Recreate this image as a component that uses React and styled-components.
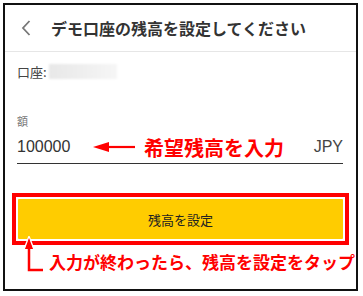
import React from "react";
import styled, { createGlobalStyle } from "styled-components";

const GlobalStyle = createGlobalStyle`
  body {
    margin: 0;
    background: #fff;
    font-family: "Noto Sans CJK JP", "Noto Sans", sans-serif;
  }
`;

const Frame = styled.div`
  margin: 3px 0 0 3px;
  width: 351px;
  height: 284px;
  border: 2px solid #111;
  display: flex;
  flex-direction: column;
`;

const Header = styled.div`
  height: 46px;
  border-bottom: 1px solid #e6e6e6;
  display: flex;
  align-items: center;
  padding-left: 16px;
  gap: 20px;
`;

const Title = styled.h1`
  margin: 0;
  font-size: 16px;
  font-weight: 700;
  color: #333;
`;

const Body = styled.div`
  padding: 0 13px 0 12px;
  display: flex;
  flex-direction: column;
`;

const AccountRow = styled.div`
  display: flex;
  align-items: center;
  height: 18px;
  margin-top: 10px;
  font-size: 13px;
  color: #444;
`;

const Blurred = styled.div`
  width: 68px;
  height: 15px;
  margin-left: 2px;
  background: linear-gradient(to right, #e8e8e8, #f0f0f0 60%, #f6f6f6);
  filter: blur(1px);
`;

const Label = styled.div`
  margin-top: 34px;
  font-size: 11px;
  color: #777;
  height: 14px;
  line-height: 14px;
`;

const InputRow = styled.div`
  margin-top: 4px;
  height: 30px;
  display: flex;
  align-items: center;
  border-bottom: 1px solid #333;
  padding-bottom: 1px;
`;

const Value = styled.span`
  font-family: "Liberation Sans", Arial, sans-serif;
  font-size: 16px;
  color: #333;
  width: 75px;
`;

const Note = styled.span`
  color: #f00;
  font-weight: 700;
  font-size: ${(p) => p.size}px;
  white-space: nowrap;
`;

const Unit = styled.span`
  margin-left: auto;
  font-family: "Liberation Sans", Arial, sans-serif;
  font-size: 16px;
  color: #444;
`;

const Highlight = styled.div`
  margin: 29px 7px 0 7px;
  border: 4px solid #f00;
  padding: 2px;
`;

const Button = styled.button`
  display: block;
  width: 100%;
  height: 40px;
  border: none;
  border-radius: 1px;
  background: #ffcc00;
  color: #222;
  font-family: "Noto Sans CJK JP", sans-serif;
  font-size: 13px;
  cursor: pointer;
`;

const Callout = styled.div`
  display: flex;
  align-items: flex-start;
  margin: -9px 0 0 16px;
  gap: 2px;
`;

const CalloutText = styled(Note)`
  margin-top: 14px;
  line-height: 24px;
`;

const Chevron = () => (
  <svg width="10" height="16" viewBox="0 0 10 16">
    <path d="M8.5 1 L2 8 L8.5 15" fill="none" stroke="#777" strokeWidth="1.8" />
  </svg>
);

const LeftArrow = () => (
  <svg width="46" height="12" viewBox="0 0 46 12" style={{ marginRight: 6 }}>
    <path d="M14 6 H43" stroke="#f00" strokeWidth="2.2" />
    <path d="M1 6 L17 1 L17 11 Z" fill="#f00" />
  </svg>
);

const LArrow = () => (
  <svg width="26" height="40" viewBox="0 0 26 40">
    <path d="M8 10 V34 H22" fill="none" stroke="#fff" strokeWidth="5" />
    <path d="M8 1 L3 14 L13 14 Z" fill="#f00" stroke="#fff" strokeWidth="2" strokeLinejoin="round" />
    <path d="M8 10 V34 H22" fill="none" stroke="#f00" strokeWidth="2.5" />
    <path d="M8 2 L4 13 L12 13 Z" fill="#f00" />
  </svg>
);

export default function App() {
  return (
    <>
      <GlobalStyle />
      <Frame>
        <Header>
          <Chevron />
          <Title>デモ口座の残高を設定してください</Title>
        </Header>
        <Body>
          <AccountRow>
            口座:<Blurred />
          </AccountRow>
          <Label>額</Label>
          <InputRow>
            <Value>100000</Value>
            <LeftArrow />
            <Note size={20}>希望残高を入力</Note>
            <Unit>JPY</Unit>
          </InputRow>
        </Body>
        <Highlight>
          <Button>残高を設定</Button>
        </Highlight>
        <Callout>
          <LArrow />
          <CalloutText size={17}>入力が終わったら、残高を設定をタップ</CalloutText>
        </Callout>
      </Frame>
    </>
  );
}
